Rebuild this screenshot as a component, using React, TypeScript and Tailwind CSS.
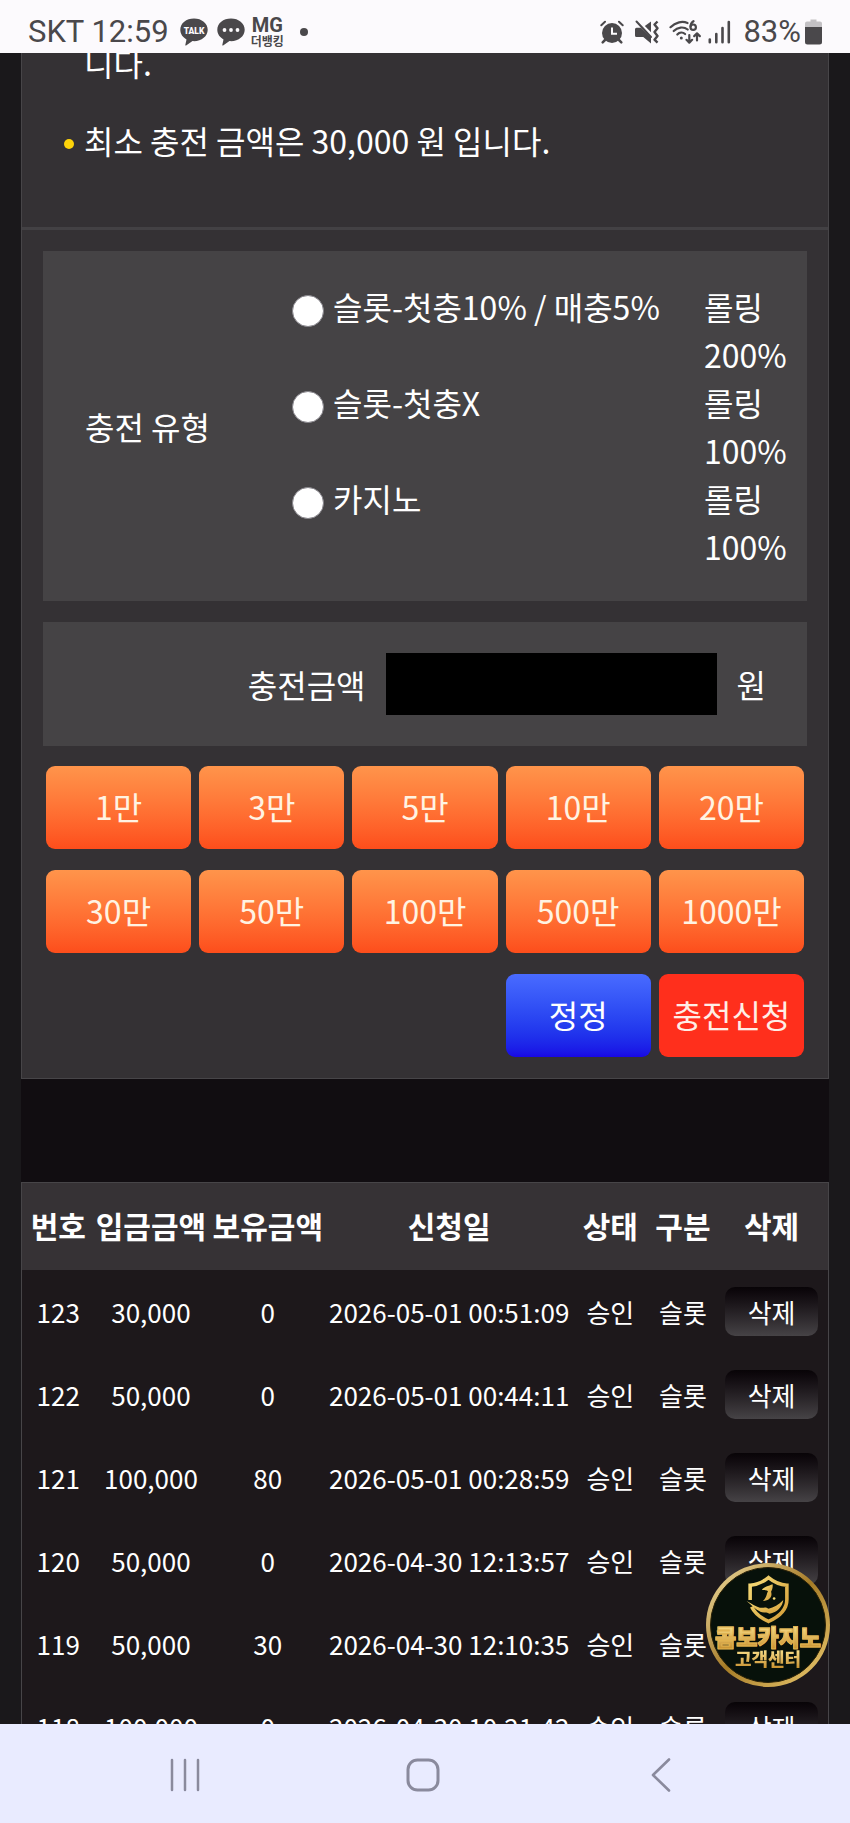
import React, { useState } from 'react';

interface DepositRow {
    id: number;
    amount: string;
    balance: string;
    date: string;
    status: string;
    kind: string;
}

const chargeTypes = [
    { id: 'slot-first', name: '슬롯-첫충10% / 매충5%', rolling: '롤링 200%' },
    { id: 'slot-none', name: '슬롯-첫충X', rolling: '롤링 100%' },
    { id: 'casino', name: '카지노', rolling: '롤링 100%' },
];

const amounts = [1, 3, 5, 10, 20, 30, 50, 100, 500, 1000];

const rows: DepositRow[] = [
    { id: 123, amount: '30,000', balance: '0', date: '2026-05-01 00:51:09', status: '승인', kind: '슬롯' },
    { id: 122, amount: '50,000', balance: '0', date: '2026-05-01 00:44:11', status: '승인', kind: '슬롯' },
    { id: 121, amount: '100,000', balance: '80', date: '2026-05-01 00:28:59', status: '승인', kind: '슬롯' },
    { id: 120, amount: '50,000', balance: '0', date: '2026-04-30 12:13:57', status: '승인', kind: '슬롯' },
    { id: 119, amount: '50,000', balance: '30', date: '2026-04-30 12:10:35', status: '승인', kind: '슬롯' },
    { id: 118, amount: '100,000', balance: '0', date: '2026-04-30 10:21:42', status: '승인', kind: '슬롯' },
];

const StatusBar: React.FC = () => (
    <header className="flex h-[53px] shrink-0 items-center justify-between bg-[#fcfafd] pt-[10px] pr-7 pl-7 font-['Roboto',sans-serif] text-[#4a484b]">
        <div className="flex items-center">
            <span className="text-[31px] leading-[40px]">SKT 12:59</span>
            {/* kakao talk */}
            <svg className="ml-[11px] h-7 w-7" viewBox="0 0 28 28" aria-label="Talk">
                <path d="M14 0.5C6.3 0.5 0.3 5.3 0.3 11.8c0 4.200 2.500 7.600 6.200 9.600L5.300 27c-.1.500.4.700.8.400l6.400-4.300c.5 0 1 .1 1.500.1 7.700 0 13.700-5 13.700-11.400S21.700.5 14 .5z" fill="currentColor" />
                <text x="14" y="15.500" textAnchor="middle" fontSize="8.500" fontWeight="900" fill="#fcfafd">TALK</text>
            </svg>
            <svg className="ml-[9px] h-7 w-7" viewBox="0 0 28 28" aria-hidden="true">
                <path d="M14 0.5C6.3 0.5 0.3 5.3 0.3 11.8c0 4.200 2.500 7.600 6.200 9.600L5.300 27c-.1.500.4.700.8.400l6.400-4.300c.5 0 1 .1 1.500.1 7.700 0 13.700-5 13.700-11.400S21.700.5 14 .5z" fill="currentColor" />
                <circle cx="7.500" cy="12" r="1.900" fill="#fcfafd" />
                <circle cx="14" cy="12" r="1.900" fill="#fcfafd" />
                <circle cx="20.500" cy="12" r="1.900" fill="#fcfafd" />
            </svg>
            <div className="ml-[6px] flex flex-col items-center font-bold">
                <span className="text-[20px] leading-[18px]">MG</span>
                <span className="font-['Noto_Sans_CJK_KR',sans-serif] text-[12px] leading-[14px]">더뱅킹</span>
            </div>
            <span className="ml-4 h-2 w-2 rounded-full bg-[#4a484b]" />
        </div>
        <div className="flex items-center">
            {/* alarm */}
            <svg className="h-6 w-6" viewBox="0 0 24 24" fill="none" stroke="currentColor" aria-hidden="true">
                <circle cx="12" cy="13" r="10" fill="currentColor" stroke="none" />
                <path d="M1.300 5.200 5 1.800M22.700 5.200 19 1.800" strokeWidth="2" strokeLinecap="round" />
                <path d="m5 20-2.300 2.300M19 20l2.300 2.300" strokeWidth="2.500" strokeLinecap="round" />
                <path d="M12 7.500v6.200h5" stroke="#fcfafd" strokeWidth="2" />
            </svg>
            {/* muted speaker with vibration */}
            <svg className="ml-[11px] h-6 w-6" viewBox="0 0 24 24" aria-hidden="true">
                <path d="M16 1.500v10.800L9.800 6z" fill="currentColor" />
                <path d="M1.500 7.800h4.500L16 17.600V23.500L8.300 17H1.500A1.500 1.500 0 0 1 0 15.500v-6.200A1.500 1.500 0 0 1 1.500 7.800z" fill="currentColor" />
                <path d="M1.500 1.500 16 17" stroke="currentColor" strokeWidth="2" strokeLinecap="round" />
                <path d="m22.500 1.500-3 3 3 3.800-3 3.800 3 3.800-3 3.800 3 3" fill="none" stroke="currentColor" strokeWidth="2.400" strokeLinejoin="round" />
            </svg>
            {/* wifi 6 with transfer arrows */}
            <svg className="ml-[10px] h-6 w-8" viewBox="0 0 32 24" fill="none" stroke="currentColor" strokeWidth="2.200" strokeLinecap="round" strokeLinejoin="round" aria-hidden="true">
                <path d="M1.500 7.200C6.500 2 13.500.8 18.500 3" />
                <path d="M4.700 11c3.800-4 10-4.700 14-1.500" />
                <path d="M8.300 14.500c2.200-2.400 5.600-2.400 7.800-.5" />
                <circle cx="12.300" cy="18" r="1.500" fill="currentColor" stroke="none" />
                <path d="M24.500 1.200c-2 1.500-3 3.600-3 5.300" />
                <circle cx="24.200" cy="7.200" r="2.700" />
                <path d="M20.300 15v7.500m-2.800-2.700 2.800 2.800 2.800-2.800M28 20.500v-7m-2.800 2.600L28 13.300l2.800 2.800" />
            </svg>
            <svg className="ml-[7px] h-6 w-6" viewBox="0 0 24 24" stroke="currentColor" strokeWidth="2.600" strokeLinecap="round" aria-hidden="true">
                <path d="M1.800 19.500v2.700M8.300 14v8.200M14.500 8v14.200M20.800 2v20.200" />
            </svg>
            <span className="ml-[11px] text-[31px] leading-[40px]">83%</span>
            <svg className="ml-1 h-[26px] w-[17px]" viewBox="0 0 17 26" aria-hidden="true">
                <path d="M5.500.5h6v2H15a2 2 0 0 1 2 2V9H0V4.500a2 2 0 0 1 2-2h3.500z" fill="#c3c1c4" />
                <path d="M0 8h17v15a2.500 2.500 0 0 1-2.500 2.500h-12A2.500 2.500 0 0 1 0 23z" fill="currentColor" />
            </svg>
        </div>
    </header>
);

const SupportBadge: React.FC = () => (
    <a
        href="#support"
        className="absolute right-5 bottom-[37px] flex h-[124px] w-[124px] flex-col items-center rounded-full bg-linear-to-br from-[#f3e3a4] via-[#a67c26] to-[#f0cf73] p-1 font-black"
    >
        <span className="flex h-full w-full flex-col items-center rounded-full border border-[#2b2208] bg-[#07110a] pt-[7px]">
            <svg className="h-[49px] w-[46px]" viewBox="0 0 44 48" fill="none" aria-hidden="true">
                <defs>
                    <linearGradient id="gold" x1="0" y1="0" x2="1" y2="1">
                        <stop offset="0" stopColor="#f6dc78" />
                        <stop offset="1" stopColor="#d39c36" />
                    </linearGradient>
                </defs>
                <path d="M4.500 24.500V10C12 9.500 17 7 22.500 2.500 28 7 33 9.500 40.500 10v14c0 10-8 17-18 21.500C15 42 9 37.500 6 31" stroke="url(#gold)" strokeWidth="3.500" />
                <path d="M26.500 9c-4 1.500-9 3-10.500 5.500 2 1 5 .3 6 1.300-1.500 2.500-1 6-5 9.700 7-.5 9.500-5 8-9 1-1.500 2-4.500 1.500-7.500z" fill="url(#gold)" />
                <path d="M1 25.500c5 2.500 9 5.500 13 6.500 3 .8 5-1.500 8.500 1 5-1 10-4 14.500-8.500-1 7-6 12-13.500 13.500-3-2.500-6-.5-9-2C9 33.500 6 29.500 1 25.500z" fill="url(#gold)" />
                <circle cx="28" cy="23" r="1.300" fill="#f6dc78" />
            </svg>
            <span className="bg-linear-to-b from-[#fbe38d] to-[#c8922f] bg-clip-text text-[23px] leading-[25px] whitespace-nowrap text-transparent [-webkit-text-stroke:1px_#e2b350]">콤보카지노</span>
            <span className="bg-linear-to-b from-[#fbe38d] to-[#c8922f] bg-clip-text text-[18px] leading-[19px] whitespace-nowrap text-transparent">고객센터</span>
        </span>
    </a>
);

const NavBar: React.FC = () => (
    <nav className="grid h-[99px] shrink-0 grid-cols-3 items-center bg-[#e9ebff] pt-0.5 pr-[70px] pl-[66px] text-[#8a8a9d]">
        <button type="button" aria-label="최근 앱" className="flex justify-center">
            <svg className="h-9 w-9" viewBox="0 0 36 36" stroke="currentColor" strokeWidth="2.500" strokeLinecap="round">
                <path d="M5 3v30M18 3v30M31 3v30" />
            </svg>
        </button>
        <button type="button" aria-label="홈" className="flex justify-center">
            <svg className="h-9 w-9" viewBox="0 0 36 36" fill="none" stroke="currentColor" strokeWidth="3">
                <rect x="3" y="3" width="30" height="30" rx="9.500" />
            </svg>
        </button>
        <button type="button" aria-label="뒤로" className="flex justify-center">
            <svg className="h-9 w-9" viewBox="0 0 36 36" fill="none" stroke="currentColor" strokeWidth="2.600" strokeLinecap="round" strokeLinejoin="round">
                <path d="M26 2.500 10 18l16 15.500" />
            </svg>
        </button>
    </nav>
);

const App: React.FC = () => {
    const [chargeType, setChargeType] = useState('');
    const [amount, setAmount] = useState(0);

    return (
        <div className="flex h-screen flex-col overflow-hidden bg-[#1a181b] font-['Noto_Sans_CJK_KR',sans-serif] text-[32px] leading-[48px] text-white">
            <StatusBar />

            <div className="relative min-h-0 flex-1 overflow-hidden">
                <main className="mx-[21px] bg-[#110d11]">
                    <section className="border-x border-b border-[#474548] bg-[#343134]">
                        {/* notice list, scrolled under the status bar */}
                        <ul className="-mt-[15px] space-y-[30px] border-b-3 border-[#434144] px-[42px] pb-[63px]">
                            <li className="pl-5">니다.</li>
                            <li className="flex items-center gap-[10px]">
                                <span className="mt-2 h-[10px] w-[10px] rounded-full bg-[#fdd30a]" />
                                최소 충전 금액은 30,000 원 입니다.
                            </li>
                        </ul>

                        <form className="p-[21px]" onSubmit={(e) => e.preventDefault()}>
                            <fieldset className="flex items-center bg-[#454345] py-[31px] pr-[19px] pl-[42px]" aria-labelledby="charge-type">
                                <span id="charge-type" className="w-[207px] shrink-0">충전 유형</span>
                                <div className="flex-1">
                                    {chargeTypes.map((type) => (
                                        <div key={type.id} className="flex justify-between">
                                            <label className="flex items-start gap-[9px]">
                                                <input
                                                    type="radio"
                                                    name="charge-type"
                                                    checked={chargeType === type.id}
                                                    onChange={() => setChargeType(type.id)}
                                                    className="mt-[13px] h-8 w-8 appearance-none rounded-full border border-[#86848a] bg-white checked:border-8 checked:border-[#1a73e8]"
                                                />
                                                {type.name}
                                            </label>
                                            <span className="w-[84px]">{type.rolling}</span>
                                        </div>
                                    ))}
                                </div>
                            </fieldset>

                            <div className="mt-[21px] flex items-center justify-end gap-5 bg-[#454345] py-[31px] pr-[41px]">
                                <label htmlFor="amount">충전금액</label>
                                <input
                                    id="amount"
                                    type="text"
                                    inputMode="numeric"
                                    value={amount ? amount.toLocaleString() : ''}
                                    onChange={(e) => setAmount(Number(e.target.value.replace(/\D/g, '')))}
                                    className="h-[62px] w-[331px] bg-black px-4 text-right outline-none"
                                />
                                <span>원</span>
                            </div>

                            <div className="mt-5 grid grid-cols-5 gap-x-2 gap-y-[21px] px-[3px]">
                                {amounts.map((n) => (
                                    <button
                                        key={n}
                                        type="button"
                                        onClick={() => setAmount(amount + n * 10000)}
                                        className="h-[83px] rounded-[9px] bg-linear-to-b from-[#ff944b] to-[#fd4d1b] pb-[3px] text-[#fff3e2]"
                                    >
                                        {n}만
                                    </button>
                                ))}
                                <button
                                    type="button"
                                    onClick={() => setAmount(0)}
                                    className="col-start-4 h-[83px] rounded-[9px] bg-linear-to-b from-[#496bff] to-[#1906e5] pb-[3px]"
                                >
                                    정정
                                </button>
                                <button type="submit" className="h-[83px] rounded-[9px] bg-[#ff2f1c] pb-[3px] text-[#ffeee6]">
                                    충전신청
                                </button>
                            </div>
                        </form>
                    </section>

                    <table className="mt-[103px] w-full table-fixed border-separate border-spacing-0 border border-[#474548] bg-[#1d181b] text-center text-[26px] leading-[39px] whitespace-nowrap">
                        <thead>
                            <tr className="h-[87px] bg-[#363235] text-[30px]">
                                <th className="w-[9%] pb-[3px]">번호</th>
                                <th className="w-[14%] pb-[3px]">입금금액</th>
                                <th className="w-[15%] pb-[3px]">보유금액</th>
                                <th className="w-[30%] pb-[3px]">신청일</th>
                                <th className="w-[10%] pb-[3px]">상태</th>
                                <th className="w-[8%] pb-[3px]">구분</th>
                                <th className="w-[14%] pb-[3px]">삭제</th>
                            </tr>
                        </thead>
                        <tbody>
                            {rows.map((row) => (
                                <tr key={row.id} className="h-[83px]">
                                    <td>{row.id}</td>
                                    <td>{row.amount}</td>
                                    <td>{row.balance}</td>
                                    <td>{row.date}</td>
                                    <td>{row.status}</td>
                                    <td>{row.kind}</td>
                                    <td>
                                        <button
                                            type="button"
                                            className="mx-auto block h-[49px] w-[93px] rounded-[10px] bg-linear-to-b from-[#080407] to-[#464346]"
                                        >
                                            삭제
                                        </button>
                                    </td>
                                </tr>
                            ))}
                        </tbody>
                    </table>
                </main>
                <SupportBadge />
            </div>

            <NavBar />
        </div>
    );
};

export default App;
